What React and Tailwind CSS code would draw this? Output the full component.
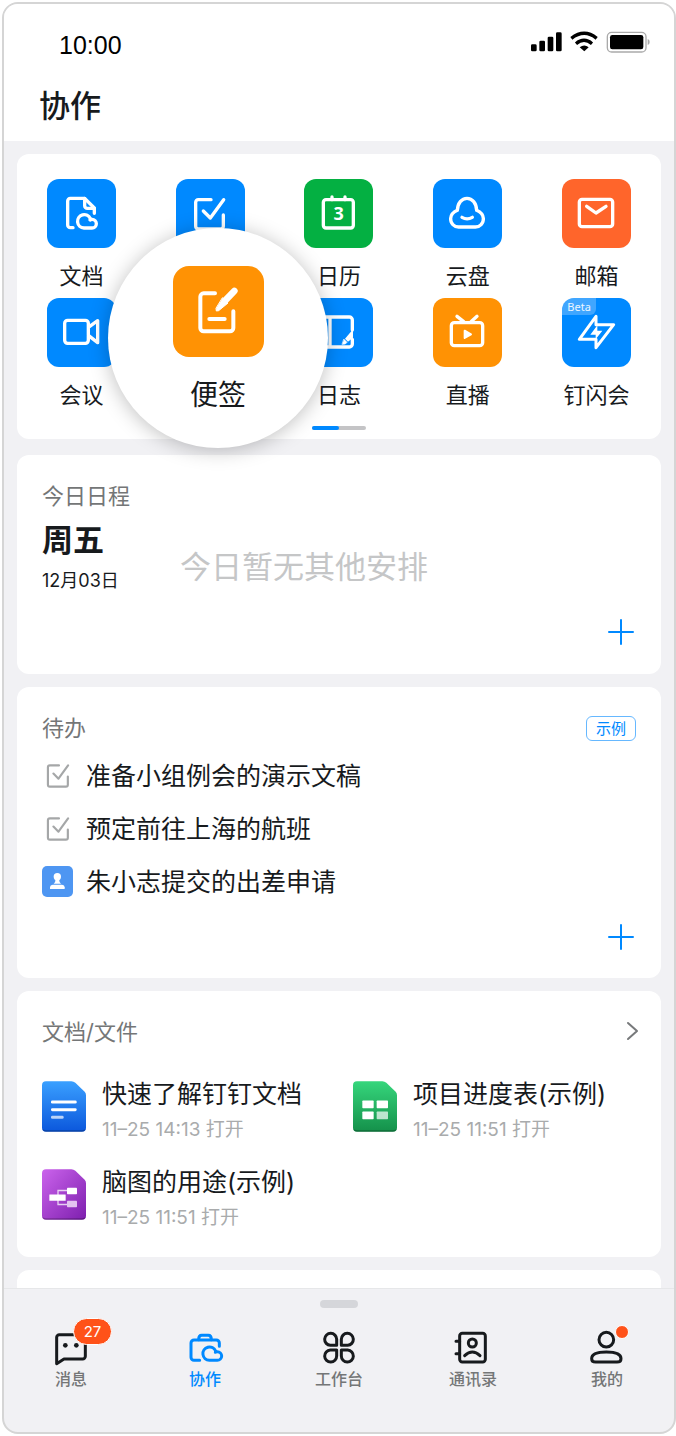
import { useState } from 'react';
import clsx from 'clsx';

const cloudPath = 'M111 147a20 20 0 1 1 19-28l-1 4q3-2 6-2a13 13 0 0 1 0 26z';

function TileIcon({ children }) {
  return (
    <svg viewBox="0 0 207 207" className="size-full" fill="none" stroke="#fff" strokeWidth="10" strokeLinecap="round" strokeLinejoin="round" aria-hidden="true">
      {children}
    </svg>
  );
}

function CheckShape() {
  return (
    <>
      <path d="M105 62H67a8 8 0 0 0-8 8v72a8 8 0 0 0 8 8h67a8 8 0 0 0 8-8v-34" />
      <path d="M82 96l21 21 40-55" />
    </>
  );
}

const icons = {
  doc: (
    <TileIcon>
      <path d="M78 146h-8a8 8 0 0 1-8-8V66a8 8 0 0 1 8-8h43l29 29v16" />
      <path d="M113 58v22a8 8 0 0 0 8 8h21" />
      <path d={cloudPath} />
    </TileIcon>
  ),
  todo: (
    <TileIcon>
      <CheckShape />
    </TileIcon>
  ),
  calendar: (
    <TileIcon>
      <rect x="58" y="62" width="90" height="85" rx="8" />
      <path d="M84 54v8M123 54v8" />
      <text x="104" y="124" textAnchor="middle" fill="#fff" stroke="none" fontSize="54" fontWeight="700" className="font-['Open_Sans',sans-serif]">3</text>
    </TileIcon>
  ),
  drive: (
    <TileIcon>
      <path d="M78 144a24 24 0 0 1-25-26c1-12 11-20 20-24 1-22 13-36 29-36s28 14 29 36c9 4 19 12 20 24a24 24 0 0 1-25 26z" />
      <path d="M87 115q15 9 31 0" />
    </TileIcon>
  ),
  mail: (
    <TileIcon>
      <rect x="52" y="61" width="100" height="82" rx="8" />
      <path d="M74 82l28 20 30-20" />
    </TileIcon>
  ),
  meeting: (
    <TileIcon>
      <path d="M124 88V76a9 9 0 0 0-9-9H62a9 9 0 0 0-9 9v51a9 9 0 0 0 9 9h53a9 9 0 0 0 9-9V88l28-20v66l-28-22" />
    </TileIcon>
  ),
  journal: (
    <TileIcon>
      <path d="M145 96V66a9 9 0 0 0-9-9H58v90h78a9 9 0 0 0 9-9v-14M78 57v90" />
      <path d="M147 94v25l-15 12-9-9z" fill="#fff" stroke="none" />
      <path d="M120 124l9 9-5 5-9 1z" fill="#fff" strokeWidth="2" />
    </TileIcon>
  ),
  live: (
    <TileIcon>
      <rect x="55" y="74" width="94" height="69" rx="9" />
      <path d="M72 55l20 16M132 55l-18 16" />
      <path d="M95 98l19 11-19 11z" fill="#fff" strokeWidth="6" />
    </TileIcon>
  ),
  flash: (
    <TileIcon>
      <path d="M102 55L52 124h50v25l53-69h-53z" strokeWidth="9" />
      <path d="M106 82L85 110h16v14l20-26h-15z" fill="#fff" stroke="none" />
    </TileIcon>
  ),
};

const apps = [
  { name: '文档', icon: 'doc', tile: 'bg-[#0089ff]' },
  { name: '待办', icon: 'todo', tile: 'bg-[#0089ff]', covered: true },
  { name: '日历', icon: 'calendar', tile: 'bg-[#04b042]' },
  { name: '云盘', icon: 'drive', tile: 'bg-[#0089ff]' },
  { name: '邮箱', icon: 'mail', tile: 'bg-[#ff652b]' },
  { name: '会议', icon: 'meeting', tile: 'bg-[#0089ff]' },
  null,
  { name: '日志', icon: 'journal', tile: 'bg-[#0089ff]' },
  { name: '直播', icon: 'live', tile: 'bg-[#ff9204]' },
  { name: '钉闪会', icon: 'flash', tile: 'bg-[#0089ff]', tag: 'Beta' },
];

const todos = ['准备小组例会的演示文稿', '预定前往上海的航班'];

const docs = [
  { title: '快速了解钉钉文档', time: '11–25 14:13 打开', kind: 'text' },
  { title: '项目进度表(示例)', time: '11–25 11:51 打开', kind: 'sheet' },
  { title: '脑图的用途(示例)', time: '11–25 11:51 打开', kind: 'mind' },
];

const docFills = {
  text: ['#3aa0ff', '#0b57dc'],
  sheet: ['#36d67c', '#14904a'],
  mind: ['#cb63ec', '#7d1fae'],
};

function DocIcon({ kind }) {
  const [from, to] = docFills[kind];
  return (
    <svg viewBox="0 0 132 152" className="mt-[3px] h-[51px] w-11 shrink-0" fill="#fff" aria-hidden="true">
      <defs>
        <linearGradient id={`doc-${kind}`} x1="0" y1="0" x2={kind === 'mind' ? '1' : '0'} y2="1">
          <stop offset="0" stopColor={from} />
          <stop offset="1" stopColor={to} />
        </linearGradient>
      </defs>
      <path d="M12 0H88q7 0 12 5l28 27q4 4 4 10v98a12 12 0 0 1-12 12H12a12 12 0 0 1-12-12V12A12 12 0 0 1 12 0z" fill={`url(#doc-${kind})`} />
      <path d="M1 143q3 9 11 9h108q8 0 11-9-3 4-11 4H12q-8 0-11-4z" fill="#000" opacity=".25" />
      {kind === 'text' && (
        <>
          <rect x="27" y="58" width="77" height="9" rx="4" />
          <rect x="27" y="81" width="77" height="9" rx="4" />
          <rect x="27" y="104" width="38" height="9" rx="4" opacity=".7" />
        </>
      )}
      {kind === 'sheet' && (
        <>
          <rect x="28" y="58" width="34" height="23" rx="2" />
          <rect x="71" y="58" width="34" height="23" rx="2" />
          <rect x="28" y="91" width="34" height="23" rx="2" />
          <rect x="71" y="91" width="34" height="23" rx="2" opacity=".7" />
        </>
      )}
      {kind === 'mind' && (
        <>
          <path d="M76 64H48v42h28" fill="none" stroke="#fff" strokeWidth="4" opacity=".75" />
          <rect x="22" y="76" width="49" height="19" rx="1" />
          <rect x="75" y="56" width="30" height="19" rx="2" />
          <rect x="75" y="95" width="30" height="19" rx="2" fill="#e3c4f0" />
        </>
      )}
    </svg>
  );
}

function TabIcon({ children }) {
  return (
    <svg viewBox="0 0 102 102" className="size-[34px] overflow-visible" fill="none" stroke="currentColor" strokeWidth="9" strokeLinecap="round" strokeLinejoin="round" aria-hidden="true">
      {children}
    </svg>
  );
}

const tabs = [
  {
    name: '消息',
    badge: '27',
    icon: (
      <TabIcon>
        <path d="M8 98V19a8 8 0 0 1 8-8h70a8 8 0 0 1 8 8v57a8 8 0 0 1-8 8H30z" />
        <circle cx="34" cy="43" r="7" fill="currentColor" stroke="none" />
        <circle cx="67" cy="43" r="7" fill="currentColor" stroke="none" />
      </TabIcon>
    ),
  },
  {
    name: '协作',
    icon: (
      <TabIcon>
        <path d="M35 88H18a9 9 0 0 1-9-9V36a9 9 0 0 1 9-9h67a9 9 0 0 1 9 9v10" />
        <path d="M32 26c0-9 3-13 9-13h20c6 0 9 4 9 13" />
        <path d={cloudPath} transform="translate(-47 -59)" />
      </TabIcon>
    ),
  },
  {
    name: '工作台',
    icon: (
      <TabIcon>
        <path d="M44 25v18H25A18 18 0 1 1 44 25z" />
        <path d="M58 25v18h19A18 18 0 1 0 58 25z" />
        <path d="M44 75V57H25a18 18 0 1 0 19 18z" />
        <path d="M58 75V57h19a18 18 0 1 1-19 18z" />
      </TabIcon>
    ),
  },
  {
    name: '通讯录',
    icon: (
      <TabIcon>
        <rect x="11" y="7" width="77" height="86" rx="8" />
        <path d="M0 31h11M0 68h11" />
        <circle cx="49" cy="36" r="12" />
        <path d="M26 74q23-22 46 0" />
      </TabIcon>
    ),
  },
  {
    name: '我的',
    dot: true,
    icon: (
      <TabIcon>
        <circle cx="49" cy="26" r="22" />
        <path d="M49 63c29 0 44 8 44 20 0 7-5 10-12 10H17c-7 0-12-3-12-10 0-12 15-20 44-20z" />
      </TabIcon>
    ),
  },
];

function StatusBar() {
  return (
    <div className="flex items-start justify-between pl-[55px] pr-6">
      <span className="font-['Liberation_Sans',sans-serif] text-[25px] leading-[42px] text-black">10:00</span>
      <svg viewBox="0 0 360 63" className="mt-2 h-[21px] w-[120px] overflow-visible" aria-hidden="true">
        <rect x="3" y="37" width="17" height="21" rx="4" />
        <rect x="28" y="26" width="17" height="32" rx="4" />
        <rect x="53" y="14" width="17" height="44" rx="4" />
        <rect x="78" y="1" width="17" height="57" rx="4" />
        <g fill="none" stroke="#000" strokeWidth="10">
          <path d="M124 19q39-30 76 0" />
          <path d="M138 35q24-20 48 0" />
        </g>
        <path d="M149 46q14-11 27 0l-13 12z" />
        <rect x="232" y="1" width="116" height="59" rx="13" fill="none" stroke="#aaa" strokeWidth="4" />
        <rect x="240" y="9" width="100" height="43" rx="7" />
        <path d="M353 21q6 2 6 9t-6 9z" fill="#aaa" />
      </svg>
    </div>
  );
}

function Card({ className, children }) {
  return <section className={clsx('rounded-xl bg-white px-[25px] pt-[25px]', className)}>{children}</section>;
}

function CardTitle({ children }) {
  return <h2 className="text-[22px] leading-8 text-[#747677]">{children}</h2>;
}

function AddButton({ label }) {
  return (
    <button type="button" aria-label={label} className="mr-[2px] block size-[26px] text-[#0089ff]">
      <svg viewBox="0 0 26 26" className="size-full" stroke="currentColor" strokeWidth="2" strokeLinecap="round" aria-hidden="true">
        <path d="M13 1v24M1 13h24" />
      </svg>
    </button>
  );
}

function AppGrid() {
  return (
    <section className="relative rounded-xl bg-white pb-[9px] pt-[25px]">
      <div className="grid grid-cols-5 gap-y-[6px]">
        {apps.map((app, i) =>
          app ? (
            <button key={app.name} type="button" aria-label={app.name} className="flex flex-col items-center">
              <span className={clsx('relative block size-[69px] overflow-hidden rounded-xl', app.tile)}>
                {icons[app.icon]}
                {app.tag && (
                  <span className="absolute left-0 top-0 h-[17px] w-[34px] rounded-br-md bg-white/25 text-center font-['Noto_Sans',sans-serif] text-[11px] leading-[17px] text-white/90">
                    {app.tag}
                  </span>
                )}
              </span>
              {!app.covered && <span className="mt-3 text-[22px] leading-8">{app.name}</span>}
            </button>
          ) : (
            <span key={i} />
          )
        )}
      </div>
      <div className="mx-auto mt-[15px] h-1 w-[54px] overflow-hidden rounded-full bg-[#c4c4c6]">
        <div className="h-full w-1/2 rounded-r-full bg-[#0089ff]" />
      </div>

      <button type="button" className="absolute left-[91px] top-[74px] flex size-[220px] flex-col items-center rounded-full bg-white pt-[38px] shadow-[0_2px_20px_rgba(0,0,0,0.25)]">
        <span className="block size-[91px] rounded-2xl bg-[#ff9204]">
          <svg viewBox="0 0 273 273" className="size-full" fill="none" stroke="#fff" strokeWidth="12" strokeLinecap="round" strokeLinejoin="round" aria-hidden="true">
            <path d="M126 82H92a10 10 0 0 0-10 10v94a10 10 0 0 0 10 10h79a10 10 0 0 0 10-10v-50" />
            <path d="M109 159h46" />
            <path d="M184 75l-27 28" strokeWidth="20" />
            <path d="M149 96l16 15-28 23-7 1-1-7z" fill="#fff" strokeWidth="3" />
          </svg>
        </span>
        <span className="mt-[17px] text-[28px] leading-[42px]">便签</span>
      </button>
    </section>
  );
}

function TodoItem({ text }) {
  const [done, setDone] = useState(true);
  return (
    <li>
      <label className="relative flex h-[53px] items-center">
        <input type="checkbox" className="peer sr-only" checked={done} onChange={(e) => setDone(e.target.checked)} />
        <span className="mr-[13px] flex w-[31px] justify-center text-[#a5a7a8]">
          <svg viewBox="53 56 96 100" className="size-6" fill="none" stroke="currentColor" strokeWidth="9" strokeLinecap="round" strokeLinejoin="round" aria-hidden="true">
            <CheckShape />
          </svg>
        </span>
        <span className="text-[25px] leading-9">{text}</span>
      </label>
    </li>
  );
}

export default function App() {
  const [active, setActive] = useState('协作');

  return (
    <div className="bg-white py-[2px] pl-[2px] font-['Inter','Noto_Sans_CJK_SC',sans-serif] text-[#171a1d]">
      <div className="overflow-hidden rounded-2xl border-2 border-[#d5d5d5] bg-[#f1f1f4]">
        <header className="bg-white pb-3 pt-5">
          <StatusBar />
          <h1 className="mt-[17px] pl-[35px] text-[31px] font-medium leading-[46px]">协作</h1>
        </header>

        <main className="px-[13px] pt-[13px]">
          <AppGrid />

          <Card className="mt-4 pb-[29px]">
            <CardTitle>今日日程</CardTitle>
            <div className="mt-2 flex items-center">
              <div className="w-[138px]">
                <p className="text-[31px] font-bold leading-10">周五</p>
                <p className="mt-[9px] text-[18px] leading-6">12月03日</p>
              </div>
              <p className="pt-5 text-[31px] leading-10 text-[#c5c6c7]">今日暂无其他安排</p>
            </div>
            <div className="mt-[26px] flex justify-end">
              <AddButton label="添加日程" />
            </div>
          </Card>

          <Card className="mt-[13px] pb-7">
            <div className="flex items-center justify-between">
              <CardTitle>待办</CardTitle>
              <span className="rounded-md border border-[#66b8ff] px-[9px] text-[15px] leading-[23px] text-[#0089ff]">示例</span>
            </div>
            <ul className="mt-[5px]">
              {todos.map((text) => (
                <TodoItem key={text} text={text} />
              ))}
              <li className="flex h-[53px] items-center">
                <span className="mr-[13px] block size-[31px] rounded-[5px] bg-[#4e96f2]">
                  <svg viewBox="0 0 93 93" className="size-full" fill="#fff" aria-hidden="true">
                    <circle cx="46" cy="32" r="11" />
                    <path d="M41 38h10q0 9 6 15H35q6-6 6-15z" />
                    <path d="M24 69v-5q0-7 8-8h28q8 1 8 8v5z" />
                  </svg>
                </span>
                <span className="text-[25px] leading-9">朱小志提交的出差申请</span>
              </li>
            </ul>
            <div className="mt-4 flex justify-end">
              <AddButton label="添加待办" />
            </div>
          </Card>

          <Card className="mt-[13px] pb-[27px]">
            <div className="flex items-center justify-between">
              <CardTitle>文档/文件</CardTitle>
              <button type="button" aria-label="更多文档" className="text-[#77797b]">
                <svg viewBox="0 0 12 20" className="h-5 w-3 overflow-visible" fill="none" stroke="currentColor" strokeWidth="2" strokeLinecap="round" strokeLinejoin="round" aria-hidden="true">
                  <path d="M4 1l9 8-9 8" />
                </svg>
              </button>
            </div>
            <div className="mt-[30px] grid grid-cols-2 gap-x-7 gap-y-6">
              {docs.map((doc) => (
                <a key={doc.title} href="#" className="flex items-start gap-4">
                  <DocIcon kind={doc.kind} />
                  <span>
                    <span className="block whitespace-nowrap text-[25px] leading-8">{doc.title}</span>
                    <span className="mt-2 block text-[19px] leading-6 text-[#a9abac]">{doc.time}</span>
                  </span>
                </a>
              ))}
            </div>
          </Card>

          <section className="mt-[13px] h-[18px] rounded-t-xl bg-white" />
        </main>

        <nav className="border-t border-[#e6e7e9] pb-[43px] pt-[11px]">
          <div className="mx-auto h-2 w-[38px] rounded-full bg-[#d5d6da]" />
          <div className="mt-[23px] grid grid-cols-5">
            {tabs.map((tab) => (
              <button
                key={tab.name}
                type="button"
                onClick={() => setActive(tab.name)}
                className={clsx('flex flex-col items-center', active === tab.name && 'text-[#0089ff]')}
              >
                <span className="relative block">
                  {tab.icon}
                  {tab.badge && (
                    <span className="absolute -top-[13px] left-[19px] h-[27px] w-[39px] rounded-full border border-white bg-[#ff5219] text-center text-[15px] leading-[25px] text-white">
                      {tab.badge}
                    </span>
                  )}
                  {tab.dot && <span className="absolute -right-[5px] -top-[6px] size-[14px] rounded-full border border-white bg-[#ff5219]" />}
                </span>
                <span className={clsx('mt-1 text-[16px] font-medium leading-5', active !== tab.name && 'text-[#747677]')}>{tab.name}</span>
              </button>
            ))}
          </div>
        </nav>
      </div>
    </div>
  );
}
